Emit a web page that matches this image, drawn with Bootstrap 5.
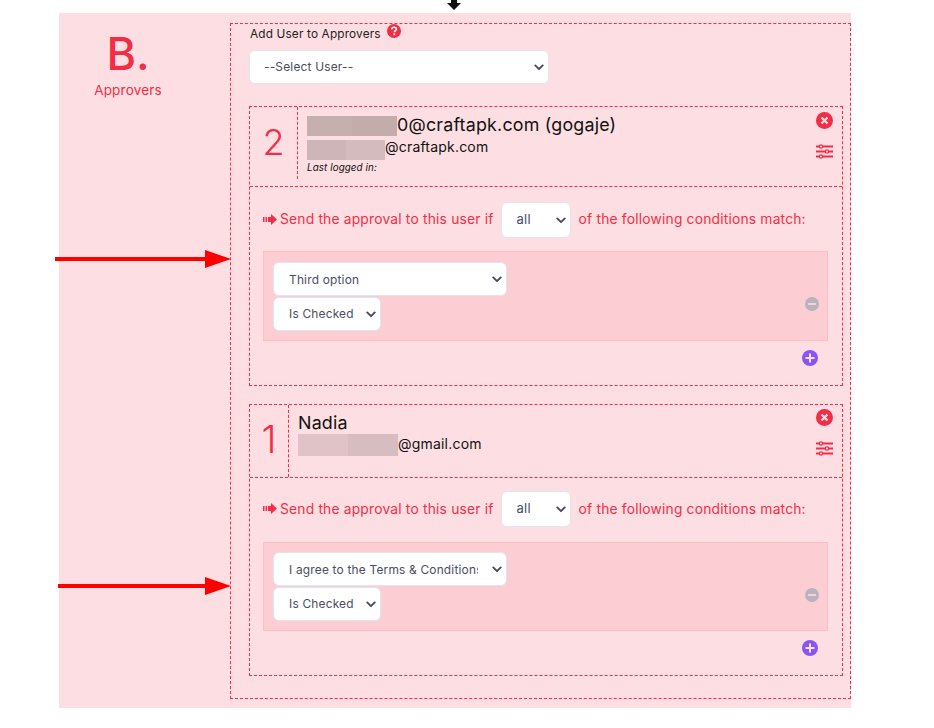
<!DOCTYPE html>
<html lang="en">
<head>
<meta charset="utf-8">
<title>Approvers</title>
<link href="https://cdn.jsdelivr.net/npm/bootstrap@5.3.0/dist/css/bootstrap.min.css" rel="stylesheet">
<style>
:root{--red:#f32d45;--pink:#fddfe3;--pink2:#fccdd3;--ink:#4a4d63;}
html,body{height:728px;overflow:hidden;background:#fff;}
body{font-family:Inter,"Liberation Sans",sans-serif;color:#111;position:relative;}
.top-arrow{position:absolute;left:447px;top:0;width:14px;height:10px;}
.note-arrow{position:absolute;height:18px;}
.note-a{left:55px;top:250px;width:176px;}
.note-b{left:58px;top:577px;width:173px;}
.panel{margin:13px 0 0 59px;width:792px;height:695px;background:var(--pink);}
.side{width:138px;margin-right:33px;color:var(--red);padding-top:11px;}
.side-big{font-size:45px;font-weight:500;line-height:60px;}
.side-sub{font-size:13.5px;line-height:20px;margin-top:-4px;letter-spacing:.2px;}
.dash-outer{width:621px;height:676px;margin-top:10px;border:1px dashed var(--red);padding:0 7px 0 18px;}
.add-label{font-size:11.8px;font-weight:400;color:#222;height:26px;padding-top:2px;padding-left:1px;letter-spacing:.16px;}
.help{margin-left:6px;width:14px;height:14px;margin-top:-2px;}
.pick{--bs-form-select-bg-img:url("data:image/svg+xml,%3csvg xmlns='http://www.w3.org/2000/svg' viewBox='0 0 12 8'%3e%3cpath fill='none' stroke='%23444760' stroke-width='2.2' stroke-linecap='round' stroke-linejoin='round' d='M1.500 1.500 6 6l4.500-4.500'/%3e%3c/svg%3e");font-family:inherit;color:var(--ink);border:1px solid #e2e5ee;border-radius:6px;background-color:#fff;box-shadow:none;padding:0 22px 0 15px;font-size:11.9px;background-size:10px 7px;background-position:right 4px center;letter-spacing:.2px;}
.pick-user{width:300px;height:34px;margin-bottom:22px;padding-left:14px;}
.pick-all{width:70px;height:36px;font-size:13px;padding-left:15px;margin:0 8px 0 7px;flex:none;}
.pick-field{width:234px;height:34px;display:block;padding-right:28px;padding-top:1px;}
.pick-op{width:108px;height:34px;display:block;margin-top:1px;}
.approver{border:1px dashed var(--red);width:594px;}
.ap-1{height:280px;margin-bottom:18px;}
.ap-2{height:272px;}
.ap-head{border-bottom:1px dashed var(--red);position:relative;}
.ap-1 .ap-head{height:80px;}
.ap-2 .ap-head{height:73px;}
.rank{color:var(--red);font-size:36px;font-weight:300;text-align:center;border-right:1px dashed var(--red);flex:none;}
.ap-1 .rank{width:48px;height:72px;line-height:70px;}
.ap-2 .rank{width:39px;height:72px;line-height:69px;font-size:38px;}
.who{padding-left:9px;color:#111;}
.name{font-size:17.85px;letter-spacing:.2px;}
.ap-1 .name{padding-top:9px;line-height:18px;height:29px;margin-bottom:4px;}
.ap-2 .name{padding-top:7px;line-height:22px;}
.mail{font-size:14px;letter-spacing:.2px;}
.ap-1 .mail{line-height:14px;}
.ap-2 .mail{line-height:20px;}
.seen{font-size:9.8px;font-style:italic;line-height:14px;margin-top:1px;letter-spacing:.1px;}
.blur{display:inline-block;vertical-align:top;}
.blur-a{width:90px;height:20px;background:linear-gradient(90deg,#c7aeaf 50%,#c4abac 50%);}
.blur-b{width:78px;height:20px;background:linear-gradient(90deg,#ceb5b8 50%,#d3bbbe 50%);}
.blur-c{width:100px;height:22px;background:linear-gradient(90deg,#dfc3c7 50%,#d8bdc0 50%);}
.tools{position:absolute;right:9px;top:5px;width:17px;}
.ap-2 .tools{top:4px;}
.tools svg{display:block;}
.tool-x{width:17px;height:17px;margin-bottom:15px;}
.tool-s{width:17px;height:15px;}
.rule{padding:15px 0 0 13px;color:var(--red);font-size:13.8px;letter-spacing:.2px;height:64px;}
.ap-2 .rule{padding-top:13px;}
.rule-text{line-height:34px;white-space:nowrap;}
.ap-2 .rule-text{line-height:36px;}
.go{width:14px;height:11px;margin:12px 3px 0 0;flex:none;}
.cond-box{margin-left:13px;width:565px;height:90px;background:var(--pink2);border:1px solid #fbbfc6;padding:10px 0 0 9px;position:relative;}
.ap-2 .cond-box{height:89px;padding-top:9px;}
.minus{position:absolute;right:8px;top:45px;width:14px;height:14px;}
.plus-row{width:568px;height:24px;padding-top:9px;box-sizing:content-box;}
.plus{width:16px;height:16px;display:block;}
</style>
</head>
<body>
<svg class="top-arrow" viewBox="0 0 14 10"><path d="M4 0h6v3h4L7 10 0 3h4z" fill="#111"/></svg>
<div class="panel d-flex">
  <div class="side text-center">
    <div class="side-big">B.</div>
    <div class="side-sub">Approvers</div>
  </div>
  <div class="dash-outer">
    <div class="add-label d-flex align-items-start">Add User to Approvers
      <svg class="help" viewBox="0 0 14 14"><circle cx="7" cy="7" r="7" fill="#f32d45"/><path d="M4.700 5.400C4.800 4 5.800 3.200 7.100 3.200c1.400 0 2.300.8 2.300 1.900 0 1.700-2 1.600-2 3.100" fill="none" stroke="#fff" stroke-width="1.600"/><rect x="6.400" y="9.400" width="1.800" height="1.700" fill="#fff"/></svg>
    </div>
    <select class="form-select pick pick-user"><option>--Select User--</option></select>

    <div class="approver ap-1">
      <div class="ap-head d-flex">
        <div class="rank">2</div>
        <div class="who">
          <div class="name"><span class="blur blur-a"></span>0@craftapk.com (gogaje)</div>
          <div class="mail"><span class="blur blur-b"></span>@craftapk.com</div>
          <div class="seen">Last logged in:</div>
        </div>
        <div class="tools">
          <svg class="tool-x" viewBox="0 0 16 16"><circle cx="8" cy="8" r="8" fill="#f32d45"/><path d="M5.200 5.200l5.600 5.600M10.800 5.200l-5.600 5.600" stroke="#fddfe3" stroke-width="2.200"/></svg>
          <svg class="tool-s" viewBox="0 0 17 15"><g fill="none" stroke="#f32d45" stroke-width="2"><path d="M0 2.500h17M0 7.500h17M0 12.500h17"/><circle cx="5" cy="2.500" r="1.700" fill="#fddfe3" stroke-width="1.200"/><circle cx="11" cy="7.500" r="1.700" fill="#fddfe3" stroke-width="1.200"/><circle cx="5" cy="12.500" r="1.700" fill="#fddfe3" stroke-width="1.200"/></g></svg>
        </div>
      </div>
      <div class="rule d-flex align-items-start">
        <svg class="go" viewBox="0 0 14 11"><path d="M0 3h1.500v5H0zM2.500 3H4v5H2.500zM5 3h3V0l6 5.500L8 11V8H5z" fill="#f32d45"/></svg>
        <span class="rule-text">Send the approval to this user if</span>
        <select class="form-select pick pick-all"><option>all</option></select>
        <span class="rule-text">of the following conditions match:</span>
      </div>
      <div class="cond-box">
        <select class="form-select pick pick-field"><option>Third option</option></select>
        <select class="form-select pick pick-op"><option>Is Checked</option></select>
        <svg class="minus" viewBox="0 0 14 14"><circle cx="7" cy="7" r="7" fill="#b8b3be"/><rect x="3" y="6" width="8" height="2" fill="#fccdd3"/></svg>
      </div>
      <div class="plus-row d-flex justify-content-end">
        <svg class="plus" viewBox="0 0 16 16"><circle cx="8" cy="8" r="8" fill="#8b55f5"/><path d="M8 3.500v9M3.500 8h9" stroke="#fddfe3" stroke-width="2"/></svg>
      </div>
    </div>

    <div class="approver ap-2">
      <div class="ap-head d-flex">
        <div class="rank">1</div>
        <div class="who">
          <div class="name">Nadia</div>
          <div class="mail"><span class="blur blur-c"></span>@gmail.com</div>
        </div>
        <div class="tools">
          <svg class="tool-x" viewBox="0 0 16 16"><circle cx="8" cy="8" r="8" fill="#f32d45"/><path d="M5.200 5.200l5.600 5.600M10.800 5.200l-5.600 5.600" stroke="#fddfe3" stroke-width="2.200"/></svg>
          <svg class="tool-s" viewBox="0 0 17 15"><g fill="none" stroke="#f32d45" stroke-width="2"><path d="M0 2.500h17M0 7.500h17M0 12.500h17"/><circle cx="5" cy="2.500" r="1.700" fill="#fddfe3" stroke-width="1.200"/><circle cx="11" cy="7.500" r="1.700" fill="#fddfe3" stroke-width="1.200"/><circle cx="5" cy="12.500" r="1.700" fill="#fddfe3" stroke-width="1.200"/></g></svg>
        </div>
      </div>
      <div class="rule d-flex align-items-start">
        <svg class="go" viewBox="0 0 14 11"><path d="M0 3h1.500v5H0zM2.500 3H4v5H2.500zM5 3h3V0l6 5.500L8 11V8H5z" fill="#f32d45"/></svg>
        <span class="rule-text">Send the approval to this user if</span>
        <select class="form-select pick pick-all"><option>all</option></select>
        <span class="rule-text">of the following conditions match:</span>
      </div>
      <div class="cond-box">
        <select class="form-select pick pick-field"><option>I agree to the Terms &amp; Conditions</option></select>
        <select class="form-select pick pick-op"><option>Is Checked</option></select>
        <svg class="minus" viewBox="0 0 14 14"><circle cx="7" cy="7" r="7" fill="#b8b3be"/><rect x="3" y="6" width="8" height="2" fill="#fccdd3"/></svg>
      </div>
      <div class="plus-row d-flex justify-content-end">
        <svg class="plus" viewBox="0 0 16 16"><circle cx="8" cy="8" r="8" fill="#8b55f5"/><path d="M8 3.500v9M3.500 8h9" stroke="#fddfe3" stroke-width="2"/></svg>
      </div>
    </div>
  </div>
</div>
<svg class="note-arrow note-a" viewBox="0 0 176 18"><path d="M0 7h150V0l26 9-26 9v-7H0z" fill="#ff0000"/></svg>
<svg class="note-arrow note-b" viewBox="0 0 173 18"><path d="M0 7h147V0l26 9-26 9v-7H0z" fill="#ff0000"/></svg>
<script src="https://cdn.jsdelivr.net/npm/bootstrap@5.3.0/dist/js/bootstrap.bundle.min.js"></script>
</body>
</html>
